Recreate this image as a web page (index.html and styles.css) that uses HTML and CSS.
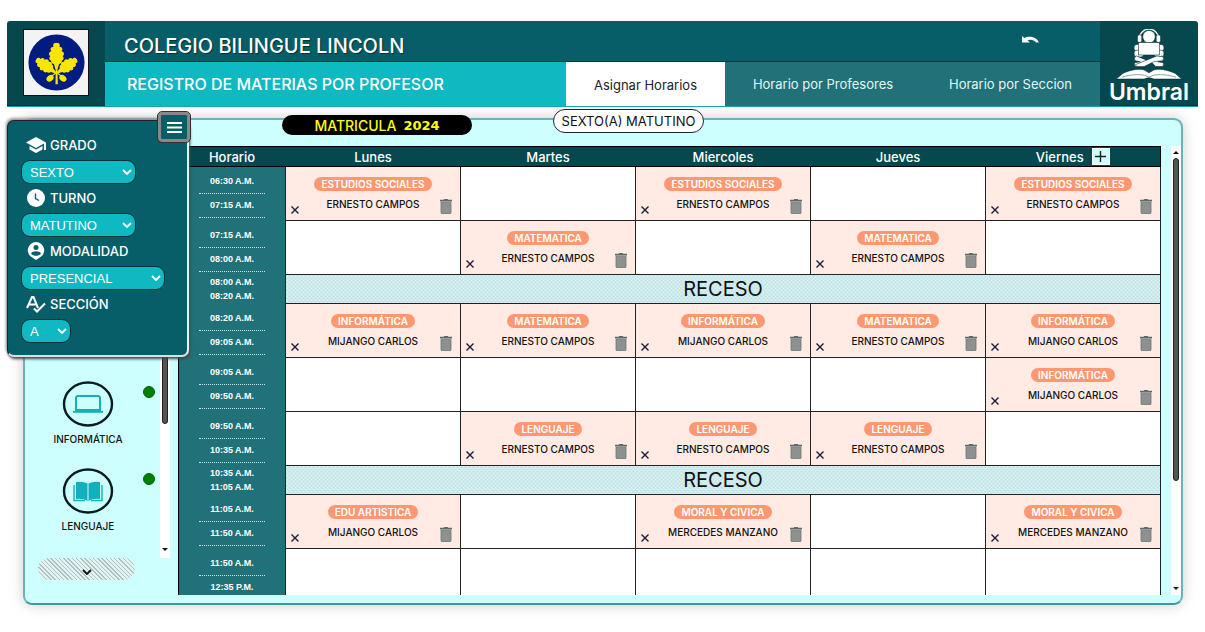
FILE: index.html
```html
<!DOCTYPE html>
<html lang="es">
<head>
<meta charset="utf-8">
<title>Registro de materias por profesor</title>
<link rel="stylesheet" href="styles.css">
</head>
<body>
<svg class="defs" aria-hidden="true">
  <symbol id="trash" viewBox="0 0 12 15"><path d="M4.200 0h3.600l.6.800H12v1.700H0V.8h3.600z" fill="#5f6b6b"/><path d="M1 3.200h10v10.300q0 1.500-1.500 1.500h-7Q1 15 1 13.500z" fill="#8d9190" stroke="#6b7575" stroke-width=".8"/></symbol>
  <symbol id="cross" viewBox="0 0 10 10"><path d="M1.500 1.500l7 7M8.500 1.500l-7 7" stroke="#1b1b3a" stroke-width="1.400" fill="none"/></symbol>
  <symbol id="chev" viewBox="0 0 10 6"><path d="M1 1l4 4 4-4" stroke="currentColor" stroke-width="1.800" fill="none"/></symbol>
  <symbol id="leaf" viewBox="-8 -26 16 27"><path d="M0-26c3 0 4 2 3 4 3 0 4 3 2 4.500 3 .5 3.500 4 1 5 2 1.500 1.500 4-.5 4.500 0 3-2 3-3 4L1 1h-2l-1.500-5c-1-1-3-1-3-4-2-.5-2.500-3-.5-4.500-2.500-1-2-4.500 1-5-2-1.500-1-4.500 2-4.500-1-2 0-4 3-4z"/></symbol>
</svg>
<header class="top">
  <div class="crest">
    <svg viewBox="0 0 65 66" role="img" aria-label="Colegio Bilingue Lincoln">
      <circle cx="33" cy="33" r="28.500" fill="#001c80"/>
      <g fill="#fbe600">
        <use href="#leaf" x="-8" y="-26" width="16" height="27" transform="translate(33 39)"/>
        <use href="#leaf" x="-8" y="-26" width="16" height="27" transform="translate(31.500 43) rotate(-55) scale(.85 .9)"/>
        <use href="#leaf" x="-8" y="-26" width="16" height="27" transform="translate(34.500 43) rotate(55) scale(.85 .9)"/>
        <path d="M32.200 36h1.600l.6 19h-2.400z"/>
        <ellipse cx="26.500" cy="49" rx="4" ry="3" transform="rotate(-40 26.500 49)"/>
        <ellipse cx="39.500" cy="49" rx="4" ry="3" transform="rotate(40 39.500 49)"/>
      </g>
      <path d="M33 43l-5 4M33 43l5 4" stroke="#fbe600" stroke-width="1.200"/>
    </svg>
  </div>
  <div class="middle">
    <div class="school">
      <h1>COLEGIO BILINGUE LINCOLN</h1>
      <button class="undo" type="button" aria-label="Regresar"><svg viewBox="0 0 17 8"><path d="M0 0l2.500 2C6-.2 14 0 17 6.500h-3C12 3.500 8 3 5.500 4.500L8 6.500H0z" fill="#fff"/></svg></button>
    </div>
    <div class="bar">
      <h2>REGISTRO DE MATERIAS POR PROFESOR</h2>
      <nav>
        <a href="#asignar" class="tab tab-first active">Asignar Horarios</a>
        <a href="#profesores" class="tab tab-mid">Horario por Profesores</a>
        <a href="#seccion" class="tab tab-last">Horario por Seccion</a>
      </nav>
    </div>
  </div>
  <div class="brand">
    <svg viewBox="0 0 70 54" aria-hidden="true">
      <g fill="#fff" stroke="#012c30" stroke-width=".6">
        <path d="M24 12v-2a11 11 0 0 1 22 0v2h-2v-2a9 9 0 0 0-18 0v2z"/>
        <rect x="23" y="6" width="4.500" height="8" rx="2"/><rect x="42.500" y="6" width="4.500" height="8" rx="2"/>
        <circle cx="35" cy="8" r="6.500"/>
        <rect x="19.500" y="16" width="10" height="7" rx="3"/><rect x="40.500" y="16" width="10" height="7" rx="3"/>
        <rect x="19.500" y="22" width="10" height="7" rx="3"/><rect x="40.500" y="22" width="10" height="7" rx="3"/>
        <path d="M36 33l12-5q4 2 1 5l-5 1 6 1q1 4-2 4H42z"/>
        <path d="M34 33l-12-5q-4 2-1 5l5 1-6 1q-1 4 2 4h6z"/>
        <path d="M21 37l22-9 7 1q1 3-2 4l-8 1-10 5h-8z"/>
        <rect x="24" y="14" width="22" height="13"/>
        <path d="M1 52l7-6c9-4 17-5 22-3.500l5 3 5-3c5-1.500 13-.5 22 3.500l7 6H40q-5-3-10 0z"/>
      </g>
      <path d="M7 50c10-3 18-3 23-2l5 2 5-2c5-1 13-1 23 2" fill="none" stroke="#52797b" stroke-width=".7"/>
    </svg>
    <span>Umbral</span>
  </div>
</header>

<main class="board">
  <div class="chips">
    <span class="year">MATRICULA <b>2024</b></span>
    <span class="section-chip">SEXTO(A) MATUTINO</span>
  </div>

  <aside class="subjects">
    <ul>
      <li>
        <svg class="round" viewBox="0 0 52 46"><ellipse cx="26" cy="23" rx="24" ry="21.500" fill="none" stroke="#081c20" stroke-width="2.400"/><path d="M14 29V17q0-2 2-2h20q2 0 2 2v12z" fill="none" stroke="#11b0ba" stroke-width="2"/><path d="M11 30h30v1.800H11z" fill="#11b0ba"/></svg>
        <span>INFORMÁTICA</span><i class="dot"></i>
      </li>
      <li>
        <svg class="round" viewBox="0 0 52 46"><ellipse cx="26" cy="23" rx="24" ry="21.500" fill="none" stroke="#081c20" stroke-width="2.400"/><path d="M14 14q7-1 11.500 1.500V33Q21 30 14 31zM38 14q-7-1-11.500 1.500V33Q31 30 38 31z" fill="#11b0ba"/><path d="M12 17v15.500h11M40 17v15.500H29" fill="none" stroke="#11b0ba" stroke-width="1.400"/></svg>
        <span>LENGUAJE</span><i class="dot"></i>
      </li>
    </ul>
    <div class="track"><i class="thumb"></i><i class="arrow down"></i></div>
    <button class="more" type="button" aria-label="Ver más"><svg><use href="#chev"/></svg></button>
  </aside>

  <div class="scroll">
    <table>
      <thead><tr><th class="hcol">Horario</th><th>Lunes</th><th>Martes</th><th>Miercoles</th><th>Jueves</th><th><span class="last-day">Viernes <button class="plus" type="button" aria-label="Agregar"><svg viewBox="0 0 11 11"><path d="M5.500 0v11M0 5.500h11" stroke="#122" stroke-width="1.400"/></svg></button></span></th></tr></thead>
      <tbody>
        <tr><th><span>06:30 A.M.</span><span>07:15 A.M.</span></th>
          <td class="on"><div class="cell"><b>ESTUDIOS SOCIALES</b><button type="button" aria-label="Quitar"><svg><use href="#cross"/></svg></button><span>ERNESTO CAMPOS</span><button type="button" aria-label="Eliminar"><svg><use href="#trash"/></svg></button></div></td>
          <td></td>
          <td class="on"><div class="cell"><b>ESTUDIOS SOCIALES</b><button type="button" aria-label="Quitar"><svg><use href="#cross"/></svg></button><span>ERNESTO CAMPOS</span><button type="button" aria-label="Eliminar"><svg><use href="#trash"/></svg></button></div></td>
          <td></td>
          <td class="on"><div class="cell"><b>ESTUDIOS SOCIALES</b><button type="button" aria-label="Quitar"><svg><use href="#cross"/></svg></button><span>ERNESTO CAMPOS</span><button type="button" aria-label="Eliminar"><svg><use href="#trash"/></svg></button></div></td></tr>
        <tr><th><span>07:15 A.M.</span><span>08:00 A.M.</span></th>
          <td></td>
          <td class="on"><div class="cell"><b>MATEMATICA</b><button type="button" aria-label="Quitar"><svg><use href="#cross"/></svg></button><span>ERNESTO CAMPOS</span><button type="button" aria-label="Eliminar"><svg><use href="#trash"/></svg></button></div></td>
          <td></td>
          <td class="on"><div class="cell"><b>MATEMATICA</b><button type="button" aria-label="Quitar"><svg><use href="#cross"/></svg></button><span>ERNESTO CAMPOS</span><button type="button" aria-label="Eliminar"><svg><use href="#trash"/></svg></button></div></td>
          <td></td></tr>
        <tr class="break"><th><span>08:00 A.M.</span><span>08:20 A.M.</span></th><td colspan="5">RECESO</td></tr>
        <tr><th><span>08:20 A.M.</span><span>09:05 A.M.</span></th>
          <td class="on"><div class="cell"><b>INFORMÁTICA</b><button type="button" aria-label="Quitar"><svg><use href="#cross"/></svg></button><span>MIJANGO CARLOS</span><button type="button" aria-label="Eliminar"><svg><use href="#trash"/></svg></button></div></td>
          <td class="on"><div class="cell"><b>MATEMATICA</b><button type="button" aria-label="Quitar"><svg><use href="#cross"/></svg></button><span>ERNESTO CAMPOS</span><button type="button" aria-label="Eliminar"><svg><use href="#trash"/></svg></button></div></td>
          <td class="on"><div class="cell"><b>INFORMÁTICA</b><button type="button" aria-label="Quitar"><svg><use href="#cross"/></svg></button><span>MIJANGO CARLOS</span><button type="button" aria-label="Eliminar"><svg><use href="#trash"/></svg></button></div></td>
          <td class="on"><div class="cell"><b>MATEMATICA</b><button type="button" aria-label="Quitar"><svg><use href="#cross"/></svg></button><span>ERNESTO CAMPOS</span><button type="button" aria-label="Eliminar"><svg><use href="#trash"/></svg></button></div></td>
          <td class="on"><div class="cell"><b>INFORMÁTICA</b><button type="button" aria-label="Quitar"><svg><use href="#cross"/></svg></button><span>MIJANGO CARLOS</span><button type="button" aria-label="Eliminar"><svg><use href="#trash"/></svg></button></div></td></tr>
        <tr><th><span>09:05 A.M.</span><span>09:50 A.M.</span></th>
          <td></td><td></td><td></td><td></td>
          <td class="on"><div class="cell"><b>INFORMÁTICA</b><button type="button" aria-label="Quitar"><svg><use href="#cross"/></svg></button><span>MIJANGO CARLOS</span><button type="button" aria-label="Eliminar"><svg><use href="#trash"/></svg></button></div></td></tr>
        <tr><th><span>09:50 A.M.</span><span>10:35 A.M.</span></th>
          <td></td>
          <td class="on"><div class="cell"><b>LENGUAJE</b><button type="button" aria-label="Quitar"><svg><use href="#cross"/></svg></button><span>ERNESTO CAMPOS</span><button type="button" aria-label="Eliminar"><svg><use href="#trash"/></svg></button></div></td>
          <td class="on"><div class="cell"><b>LENGUAJE</b><button type="button" aria-label="Quitar"><svg><use href="#cross"/></svg></button><span>ERNESTO CAMPOS</span><button type="button" aria-label="Eliminar"><svg><use href="#trash"/></svg></button></div></td>
          <td class="on"><div class="cell"><b>LENGUAJE</b><button type="button" aria-label="Quitar"><svg><use href="#cross"/></svg></button><span>ERNESTO CAMPOS</span><button type="button" aria-label="Eliminar"><svg><use href="#trash"/></svg></button></div></td>
          <td></td></tr>
        <tr class="break"><th><span>10:35 A.M.</span><span>11:05 A.M.</span></th><td colspan="5">RECESO</td></tr>
        <tr><th><span>11:05 A.M.</span><span>11:50 A.M.</span></th>
          <td class="on"><div class="cell"><b>EDU ARTISTICA</b><button type="button" aria-label="Quitar"><svg><use href="#cross"/></svg></button><span>MIJANGO CARLOS</span><button type="button" aria-label="Eliminar"><svg><use href="#trash"/></svg></button></div></td>
          <td></td>
          <td class="on"><div class="cell"><b>MORAL Y CIVICA</b><button type="button" aria-label="Quitar"><svg><use href="#cross"/></svg></button><span>MERCEDES MANZANO</span><button type="button" aria-label="Eliminar"><svg><use href="#trash"/></svg></button></div></td>
          <td></td>
          <td class="on"><div class="cell"><b>MORAL Y CIVICA</b><button type="button" aria-label="Quitar"><svg><use href="#cross"/></svg></button><span>MERCEDES MANZANO</span><button type="button" aria-label="Eliminar"><svg><use href="#trash"/></svg></button></div></td></tr>
        <tr><th><span>11:50 A.M.</span><span>12:35 P.M.</span></th><td></td><td></td><td></td><td></td><td></td></tr>
      </tbody>
    </table>
  </div>
  <div class="track main-track"><i class="arrow up"></i><i class="thumb"></i><i class="arrow down"></i></div>

  <form class="filters">
    <button class="menu" type="button" aria-label="Menú"><svg viewBox="0 0 15 11"><path d="M0 1h15M0 5.500h15M0 10h15" stroke="#fff" stroke-width="2"/></svg></button>
    <label for="grado"><svg viewBox="0 0 20 18"><path d="M10 1L0 6.500 10 12l8-4.400V14h2V6.500z"/><path d="M3.500 10v3.500L10 17l6.500-3.500V10L10 13.500z"/></svg>GRADO</label>
    <span class="pick"><select id="grado"><option>SEXTO</option></select><svg><use href="#chev"/></svg></span>
    <label for="turno"><svg viewBox="0 0 20 18"><circle cx="10" cy="9" r="9"/><path d="M9.500 4.500v5l3.500 2" fill="none" stroke="#07606b" stroke-width="1.400"/></svg>TURNO</label>
    <span class="pick"><select id="turno"><option>MATUTINO</option></select><svg><use href="#chev"/></svg></span>
    <label for="modalidad"><svg viewBox="0 0 20 18"><path d="M10 0a8.300 8.300 0 0 1 3 16L10 18l-3-2A8.300 8.300 0 0 1 10 0z"/><circle cx="10" cy="5.500" r="2.500" fill="#07606b"/><path d="M5 11.500c1-3 9-3 10 0-2 3-8 3-10 0z" fill="#07606b"/></svg>MODALIDAD</label>
    <span class="pick wide"><select id="modalidad"><option>PRESENCIAL</option></select><svg><use href="#chev"/></svg></span>
    <label for="seccion-sel"><svg viewBox="0 0 20 18"><path d="M1 13L6 2h1.500l4.500 11M3 9.500h7.500M8 13.500l3 3 8-8" fill="none" stroke="#fff" stroke-width="2"/></svg>SECCIÓN</label>
    <span class="pick short"><select id="seccion-sel"><option>A</option></select><svg><use href="#chev"/></svg></span>
  </form>
</main>
</body>
</html>
```

FILE: styles.css
```css
* { box-sizing: border-box; }
body {
  margin: 0;
  height: 100vh;
  display: flex;
  flex-direction: column;
  padding: 21px 7px 27px;
  background: #fff;
  color: #111;
  font-family: Inter, "Noto Sans", sans-serif;
}
.defs { position: absolute; width: 0; height: 0; }
button { border: 0; padding: 0; background: none; font: inherit; color: inherit; }
h1, h2, ul { margin: 0; padding: 0; font-weight: 500; }

.top {
  display: flex;
  height: 86px;
  flex: none;
  border-bottom: 1px solid #10a5ae;
  border-radius: 3px 3px 0 0;
  overflow: hidden;
}
.crest, .brand { width: 98px; flex: none; background: #06484d; border-bottom: 1px solid #02282b; }
.crest { padding: 8px 16px; }
.crest svg { display: block; width: 66px; height: 67px; background: #f3f3f3; border: 1px solid #111; }
.middle { flex: 1; display: flex; flex-direction: column; }
.school {
  flex: none;
  height: 41px;
  display: flex;
  align-items: center;
  justify-content: space-between;
  padding: 10px 61px 0 19px;
  background: #075e68;
  border-bottom: 1px solid #03383e;
  color: #fff;
}
.school h1 { font-size: 20px; line-height: 24px; text-shadow: 1px 1px 1px #033; }
.undo { height: 20px; display: flex; align-items: flex-start; }
.undo svg { width: 17px; height: 8px; }
.bar { flex: 1; display: flex; background: #207278; }
.bar h2 {
  flex: 1;
  padding-left: 22px;
  background: #0eb9c2;
  color: #fff;
  font-size: 16px;
  line-height: 45px;
}
nav { display: flex; border-bottom: 1px solid #02282b; }
.tab {
  display: flex;
  align-items: center;
  justify-content: center;
  color: #e6f4f4;
  font-size: 13px;
  text-decoration: none;
}
.tab-first { width: 159px; }
.tab-mid { width: 196px; }
.tab-last { width: 179px; }
.tab.active { background: #fff; color: #222; margin-bottom: -2px; }
.brand {
  display: flex;
  flex-direction: column;
  align-items: center;
  padding-top: 8px;
  color: #fff;
}
.brand svg { width: 70px; height: 52px; flex: none; }
.brand span { font-size: 23px; font-weight: 600; line-height: 22px; }

.board {
  position: relative;
  flex: 1;
  min-height: 0;
  display: grid;
  grid-template: 26px minmax(0, 1fr) / 153px minmax(0, 1fr) 20px;
  margin: 11px 15px 0 16px;
  padding-bottom: 8px;
  border: 2px solid #6fb0b8;
  border-bottom-color: #3c9aa2;
  border-radius: 9px;
  background: #ceffff;
  box-shadow: 0 0 14px #ccc;
}
.chips { position: absolute; top: -12px; left: 0; right: 0; height: 30px; }
.year, .section-chip { position: absolute; display: flex; align-items: center; justify-content: center; border-radius: 12px; }
.year { left: 257px; top: 7px; width: 190px; height: 20px; gap: 7px; background: #000; color: #ff0; font-size: 14px; font-weight: 500; }
.year b { font-family: "DejaVu Sans", sans-serif; font-size: 13px; }
.section-chip { left: 528px; top: 1px; width: 151px; height: 24px; background: #fff; border: 1px solid #223; font-size: 13px; white-space: nowrap; }

.subjects {
  grid-area: 2 / 1;
  display: grid;
  grid-template: minmax(0, 1fr) 37px / 1fr 10px;
  column-gap: 8px;
  padding-right: 8px;
}
.subjects ul {
  display: flex;
  flex-direction: column;
  justify-content: flex-end;
  gap: 22px;
  padding: 0 1px 26px 0;
  list-style: none;
}
.subjects li { position: relative; display: flex; flex-direction: column; align-items: center; height: 65px; font-size: 10px; line-height: 12px; gap: 5px; }
.round { width: 52px; height: 48px; }
.dot { position: absolute; top: 6px; right: -4px; width: 12px; height: 12px; border-radius: 50%; background: #008000; border: 1px solid #056205; }
.more {
  width: 97px;
  height: 22px;
  margin-left: 13px;
  border-radius: 11px;
  background: repeating-linear-gradient(45deg, #b4c0c0 0 1px, #e0f4f4 1px 3px);
}
.more svg { width: 10px; height: 6px; }

.track { position: relative; background: #fff; display: flex; flex-direction: column; align-items: center; justify-content: space-between; padding: 3px 0; }
.thumb { position: absolute; left: 2px; right: 2px; border: 1px solid #222; border-radius: 4px; background: #555; }
.subjects .thumb { top: 0; height: 278px; }
.subjects .track { justify-content: flex-end; padding-bottom: 5px; }
.arrow { border: 3px solid transparent; }
.arrow.up { border-top: 0; border-bottom-color: #111; margin-top: 2px; }
.arrow.down { border-bottom: 0; border-top-color: #111; margin-bottom: 2px; }
.main-track { grid-area: 2 / 3; width: 10px; justify-self: end; }
.main-track .thumb { top: 12px; height: 72%; }

.scroll { grid-area: 2 / 2; overflow: hidden; }
table { width: 100%; border-collapse: collapse; table-layout: fixed; border-right: 1px solid #000; }
thead th { height: 20px; padding: 0; border: 1px solid #000; border-width: 1px 0; background: #06484d; color: #fff; font-size: 13px; line-height: 18px; font-weight: 500; }
thead .hcol { width: 107px; }
.last-day { display: flex; align-items: center; justify-content: center; gap: 8px; }
.plus { width: 18px; height: 17px; display: flex; align-items: center; justify-content: center; background: #ceffff; border: 1px solid #fff; }
.plus svg { width: 11px; height: 11px; }
tbody tr { height: 54px; }
tbody th {
  padding: 3px 20px 0;
  background: #207278;
  border-left: 1px solid #000;
  color: #fff;
  font: bold 9px/20px "Liberation Sans", Arial, sans-serif;
  vertical-align: top;
}
tbody th span { display: block; height: 24px; line-height: 20px; padding-top: 1px; border-bottom: 1px dotted #cfe4e4; }
td { padding: 0; border: 1px solid #222; background: #fff; }
.on { background: #ffebe4; }
.cell {
  display: grid;
  grid-template: 14px 20px / 28px 1fr 28px;
  row-gap: 6px;
  padding-top: 6px;
  justify-items: center;
  align-items: center;
  text-align: center;
}
.cell b { grid-column: 1 / 4; padding: 0 7px; border-radius: 7px; background: #ff9870; color: #fff; font-size: 10px; line-height: 14px; font-weight: 600; }
.cell span { font-size: 10px; line-height: 14px; font-weight: 500; white-space: nowrap; align-self: start; }
.cell button { display: flex; }
.cell button:nth-of-type(1) { justify-self: start; align-self: end; padding: 0 0 2px 4px; }
.cell button:nth-of-type(1) svg { width: 10px; height: 10px; }
.cell button:nth-of-type(2) svg { width: 12px; height: 15px; }
tbody .break { height: 29px; }
.break th { padding-top: 0; }
.break th span { height: 14px; padding: 0; line-height: 14px; border: 0; }
.break td {
  background: conic-gradient(#c4dddf 25%, #d3f7f7 0 50%, #c8e0e2 0 75%, #d3f7f7 0) 0 0 / 4px 4px;
  text-align: center;
  font-size: 20px;
  line-height: 24px;
}

.filters {
  position: absolute;
  left: -18px;
  top: 0;
  width: 182px;
  display: flex;
  flex-direction: column;
  align-items: flex-start;
  padding: 15px 13px 7px;
  background: #075e68;
  border: 1px solid #222;
  border-right: 2px solid #e8f4f4;
  border-bottom: 2px solid #dde;
  border-radius: 7px;
  box-shadow: 1px 2px 3px #444, -1px -2px 3px #999;
  color: #fff;
}
.filters label { display: flex; align-items: center; gap: 4px; height: 18px; margin-left: 5px; font-size: 13px; font-weight: 500; }
.filters label svg { width: 20px; height: 18px; fill: #fff; }
.pick { position: relative; width: 115px; height: 24px; margin: 6px 0 5px; }
.pick.wide { width: 144px; }
.pick.short { width: 50px; }
.pick select {
  appearance: none;
  width: 100%;
  height: 100%;
  padding: 0 8px;
  border: 1px solid #032f35;
  border-radius: 9px;
  background: #0eb9c2;
  color: #fff;
  font: 13px "Liberation Sans", Arial, sans-serif;
}
.pick svg { position: absolute; right: 4px; top: 9px; width: 10px; height: 6px; }
.menu {
  position: absolute;
  right: -3px;
  top: -9px;
  width: 32px;
  height: 30px;
  display: flex;
  align-items: center;
  justify-content: center;
  background: #075e68;
  border: 3px solid #888;
  border-radius: 4px;
  outline: 1px solid #333;
}
.menu svg { width: 15px; height: 11px; }
```
